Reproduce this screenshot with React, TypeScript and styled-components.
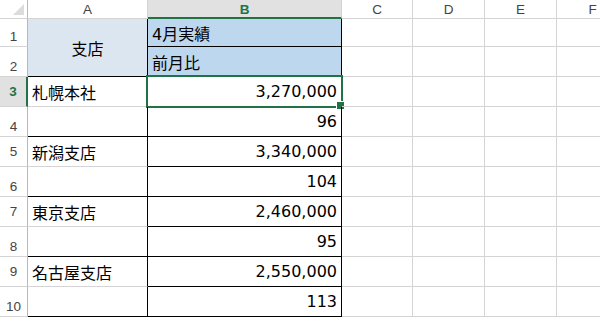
import React from "react";
import styled, { createGlobalStyle, css } from "styled-components";

const GREEN = "#217346";
const GRID = "#d4d4d4";
const HEAD_LINE = "#b8b8b8";

type Row = {
  n: number;
  a?: string;
  b?: string;
};

const rows: Row[] = [
  { n: 3, a: "札幌本社", b: "3,270,000" },
  { n: 4, b: "96" },
  { n: 5, a: "新潟支店", b: "3,340,000" },
  { n: 6, b: "104" },
  { n: 7, a: "東京支店", b: "2,460,000" },
  { n: 8, b: "95" },
  { n: 9, a: "名古屋支店", b: "2,550,000" },
  { n: 10, b: "113" },
];

const columns = ["A", "B", "C", "D", "E", "F"];

const GlobalStyle = createGlobalStyle`
  html, body {
    margin: 0;
    padding: 0;
    background: #ffffff;
    overflow: hidden;
  }
  * {
    box-sizing: border-box;
  }
`;

function App() {
  return (
    <>
      <GlobalStyle />
      <Sheet>
        <Corner>
          <svg width="11" height="11" viewBox="0 0 11 11">
            <polygon points="11,0 11,11 0,11" fill="#dcdcdc" />
          </svg>
        </Corner>
        {columns.map((c) => (
          <ColHead key={c} selected={c === "B"}>
            {c}
          </ColHead>
        ))}

        <RowHead bottom>1</RowHead>
        <Cell fill="#dce6f1" center style={{ gridRow: "span 2" }} $bottom="#000" $right="#000">
          支店
        </Cell>
        <Cell fill="#bdd7ee" $bottom="#000" $right="#000">
          4月実績
        </Cell>
        <Cell />
        <Cell />
        <Cell />
        <Cell />

        <RowHead bottom>2</RowHead>
        <Cell fill="#bdd7ee" $bottom="#000" $right="#000">
          前月比
        </Cell>
        <Cell />
        <Cell />
        <Cell />
        <Cell />

        {rows.map((r) => {
          const even = r.n % 2 === 0;
          return (
            <React.Fragment key={r.n}>
              <RowHead selected={r.n === 3} bottom={even}>
                {r.n}
              </RowHead>
              <Cell $right="#000" $bottom={even ? "#000" : GRID}>
                {r.a}
              </Cell>
              <Cell numeric active={r.n === 3} $right="#000" $bottom="#000">
                {r.b}
              </Cell>
              <Cell />
              <Cell />
              <Cell />
              <Cell />
            </React.Fragment>
          );
        })}
      </Sheet>
    </>
  );
}

const Sheet = styled.div`
  display: grid;
  grid-template-columns: 28px 120px 194px 71px 72px 72px 72px;
  grid-template-rows: 19px 28px repeat(9, 30px);
  width: 629px;
  font-family: "DejaVu Sans", "Noto Sans CJK JP", sans-serif;
  font-size: 16px;
  color: #000;
`;

const Corner = styled.div`
  display: flex;
  align-items: flex-end;
  justify-content: flex-end;
  padding: 0 3px 3px 0;
  border-right: 1px solid ${HEAD_LINE};
  border-bottom: 1px solid ${GRID};
`;

const headText = css`
  font-family: "Liberation Sans", Arial, sans-serif;
  font-size: 13.5px;
  color: #444444;
`;

const ColHead = styled.div<{ selected?: boolean }>`
  ${headText};
  display: flex;
  align-items: center;
  justify-content: center;
  padding-top: 1px;
  border-right: 1px solid ${GRID};
  border-bottom: 1px solid ${GRID};
  ${(p) =>
    p.selected &&
    css`
      background: #e1e1e1;
      color: ${GREEN};
      font-weight: 700;
      border-bottom: 2px solid ${GREEN};
    `}
`;

const RowHead = styled.div<{ selected?: boolean; bottom?: boolean }>`
  ${headText};
  display: flex;
  justify-content: center;
  align-items: ${(p) => (p.bottom ? "flex-end" : "center")};
  padding-bottom: ${(p) => (p.bottom ? "2px" : "0")};
  border-right: 1px solid ${HEAD_LINE};
  border-bottom: 1px solid ${GRID};
  ${(p) =>
    p.selected &&
    css`
      background: #e1e1e1;
      color: ${GREEN};
      font-weight: 700;
      border-right: 2px solid ${GREEN};
    `}
`;

const Cell = styled.div<{
  fill?: string;
  center?: boolean;
  numeric?: boolean;
  active?: boolean;
  $right?: string;
  $bottom?: string;
}>`
  position: relative;
  display: flex;
  align-items: center;
  justify-content: ${(p) =>
    p.center ? "center" : p.numeric ? "flex-end" : "flex-start"};
  padding: 0 4px 0 4px;
  white-space: nowrap;
  background: ${(p) => p.fill || "transparent"};
  border-right: 1px solid ${(p) => p.$right || GRID};
  border-bottom: 1px solid ${(p) => p.$bottom || GRID};
  ${(p) =>
    p.active &&
    css`
      &::before {
        content: "";
        position: absolute;
        left: -2px;
        top: -2px;
        right: -2px;
        bottom: -2px;
        border: 2px solid ${GREEN};
        pointer-events: none;
      }
      &::after {
        content: "";
        position: absolute;
        right: -4px;
        bottom: -4px;
        width: 7px;
        height: 7px;
        background: ${GREEN};
        border: 1px solid #fff;
      }
    `}
`;

export default App;
